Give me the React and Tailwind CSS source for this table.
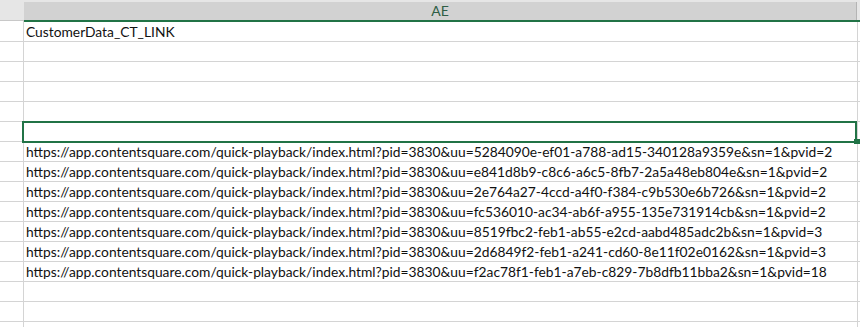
import React from 'react';

const ROWS = [
  'CustomerData_CT_LINK',
  '',
  '',
  '',
  '',
  '',
  'https://app.contentsquare.com/quick-playback/index.html?pid=3830&uu=5284090e-ef01-a788-ad15-340128a9359e&sn=1&pvid=2',
  'https://app.contentsquare.com/quick-playback/index.html?pid=3830&uu=e841d8b9-c8c6-a6c5-8fb7-2a5a48eb804e&sn=1&pvid=2',
  'https://app.contentsquare.com/quick-playback/index.html?pid=3830&uu=2e764a27-4ccd-a4f0-f384-c9b530e6b726&sn=1&pvid=2',
  'https://app.contentsquare.com/quick-playback/index.html?pid=3830&uu=fc536010-ac34-ab6f-a955-135e731914cb&sn=1&pvid=2',
  'https://app.contentsquare.com/quick-playback/index.html?pid=3830&uu=8519fbc2-feb1-ab55-e2cd-aabd485adc2b&sn=1&pvid=3',
  'https://app.contentsquare.com/quick-playback/index.html?pid=3830&uu=2d6849f2-feb1-a241-cd60-8e11f02e0162&sn=1&pvid=3',
  'https://app.contentsquare.com/quick-playback/index.html?pid=3830&uu=f2ac78f1-feb1-a7eb-c829-7b8dfb11bba2&sn=1&pvid=18',
  '',
  '',
  '',
];

const Row = ({ text }) => (
  <div className="flex h-[20px] shrink-0">
    {/* row header (cropped, numbers out of view) */}
    <div className="w-[24px] shrink-0 border-r border-b border-[#d4d4d4] bg-white" />
    <div className="w-[834px] shrink-0 flex items-end border-r border-b border-[#d4d4d4] pl-[2px] pb-[1px] whitespace-nowrap overflow-visible">
      <span className="text-[13.8px] leading-[16px] text-[#111]">{text}</span>
    </div>
    <div className="flex-1 border-b border-[#d4d4d4]" />
  </div>
);

export default function App() {
  return (
    <div
      className="relative w-[860px] h-[327px] overflow-hidden bg-white"
      style={{ fontFamily: 'Lato, "Liberation Sans", Arial, sans-serif' }}
    >
      {/* Column header strip */}
      <div className="flex h-[22px]">
        <div className="w-[24px] shrink-0 flex flex-col">
          <div className="h-[20px] bg-[#e6e6e6]" />
          <div className="h-px bg-[#c8c8c8]" />
          <div className="h-px bg-white border-r border-[#d4d4d4]" />
        </div>
        <div className="flex-1 flex flex-col">
          <div className="h-[2px] bg-[#e6e6e6]" />
          <div className="h-[18px] flex">
            <div className="w-[833px] shrink-0 flex items-center justify-center bg-[#d2d2d2] border-r border-[#b4b4b4]">
              <span className="text-[14px] leading-none text-[#2f5e45]">AE</span>
            </div>
            <div className="flex-1 bg-[#e6e6e6]" />
          </div>
          <div className="h-[2px] bg-[#217346]" />
        </div>
      </div>

      {/* Grid body */}
      <div className="flex flex-col">
        {ROWS.map((t, i) => (
          <Row key={i} text={t} />
        ))}
      </div>

      {/* Active cell selection */}
      <div className="absolute left-[22px] top-[121px] w-[835px] h-[22px] border-2 border-[#217346]" />
      <div className="absolute left-[854px] top-[139px] w-[6px] h-[5px] bg-[#217346]" />
    </div>
  );
}
